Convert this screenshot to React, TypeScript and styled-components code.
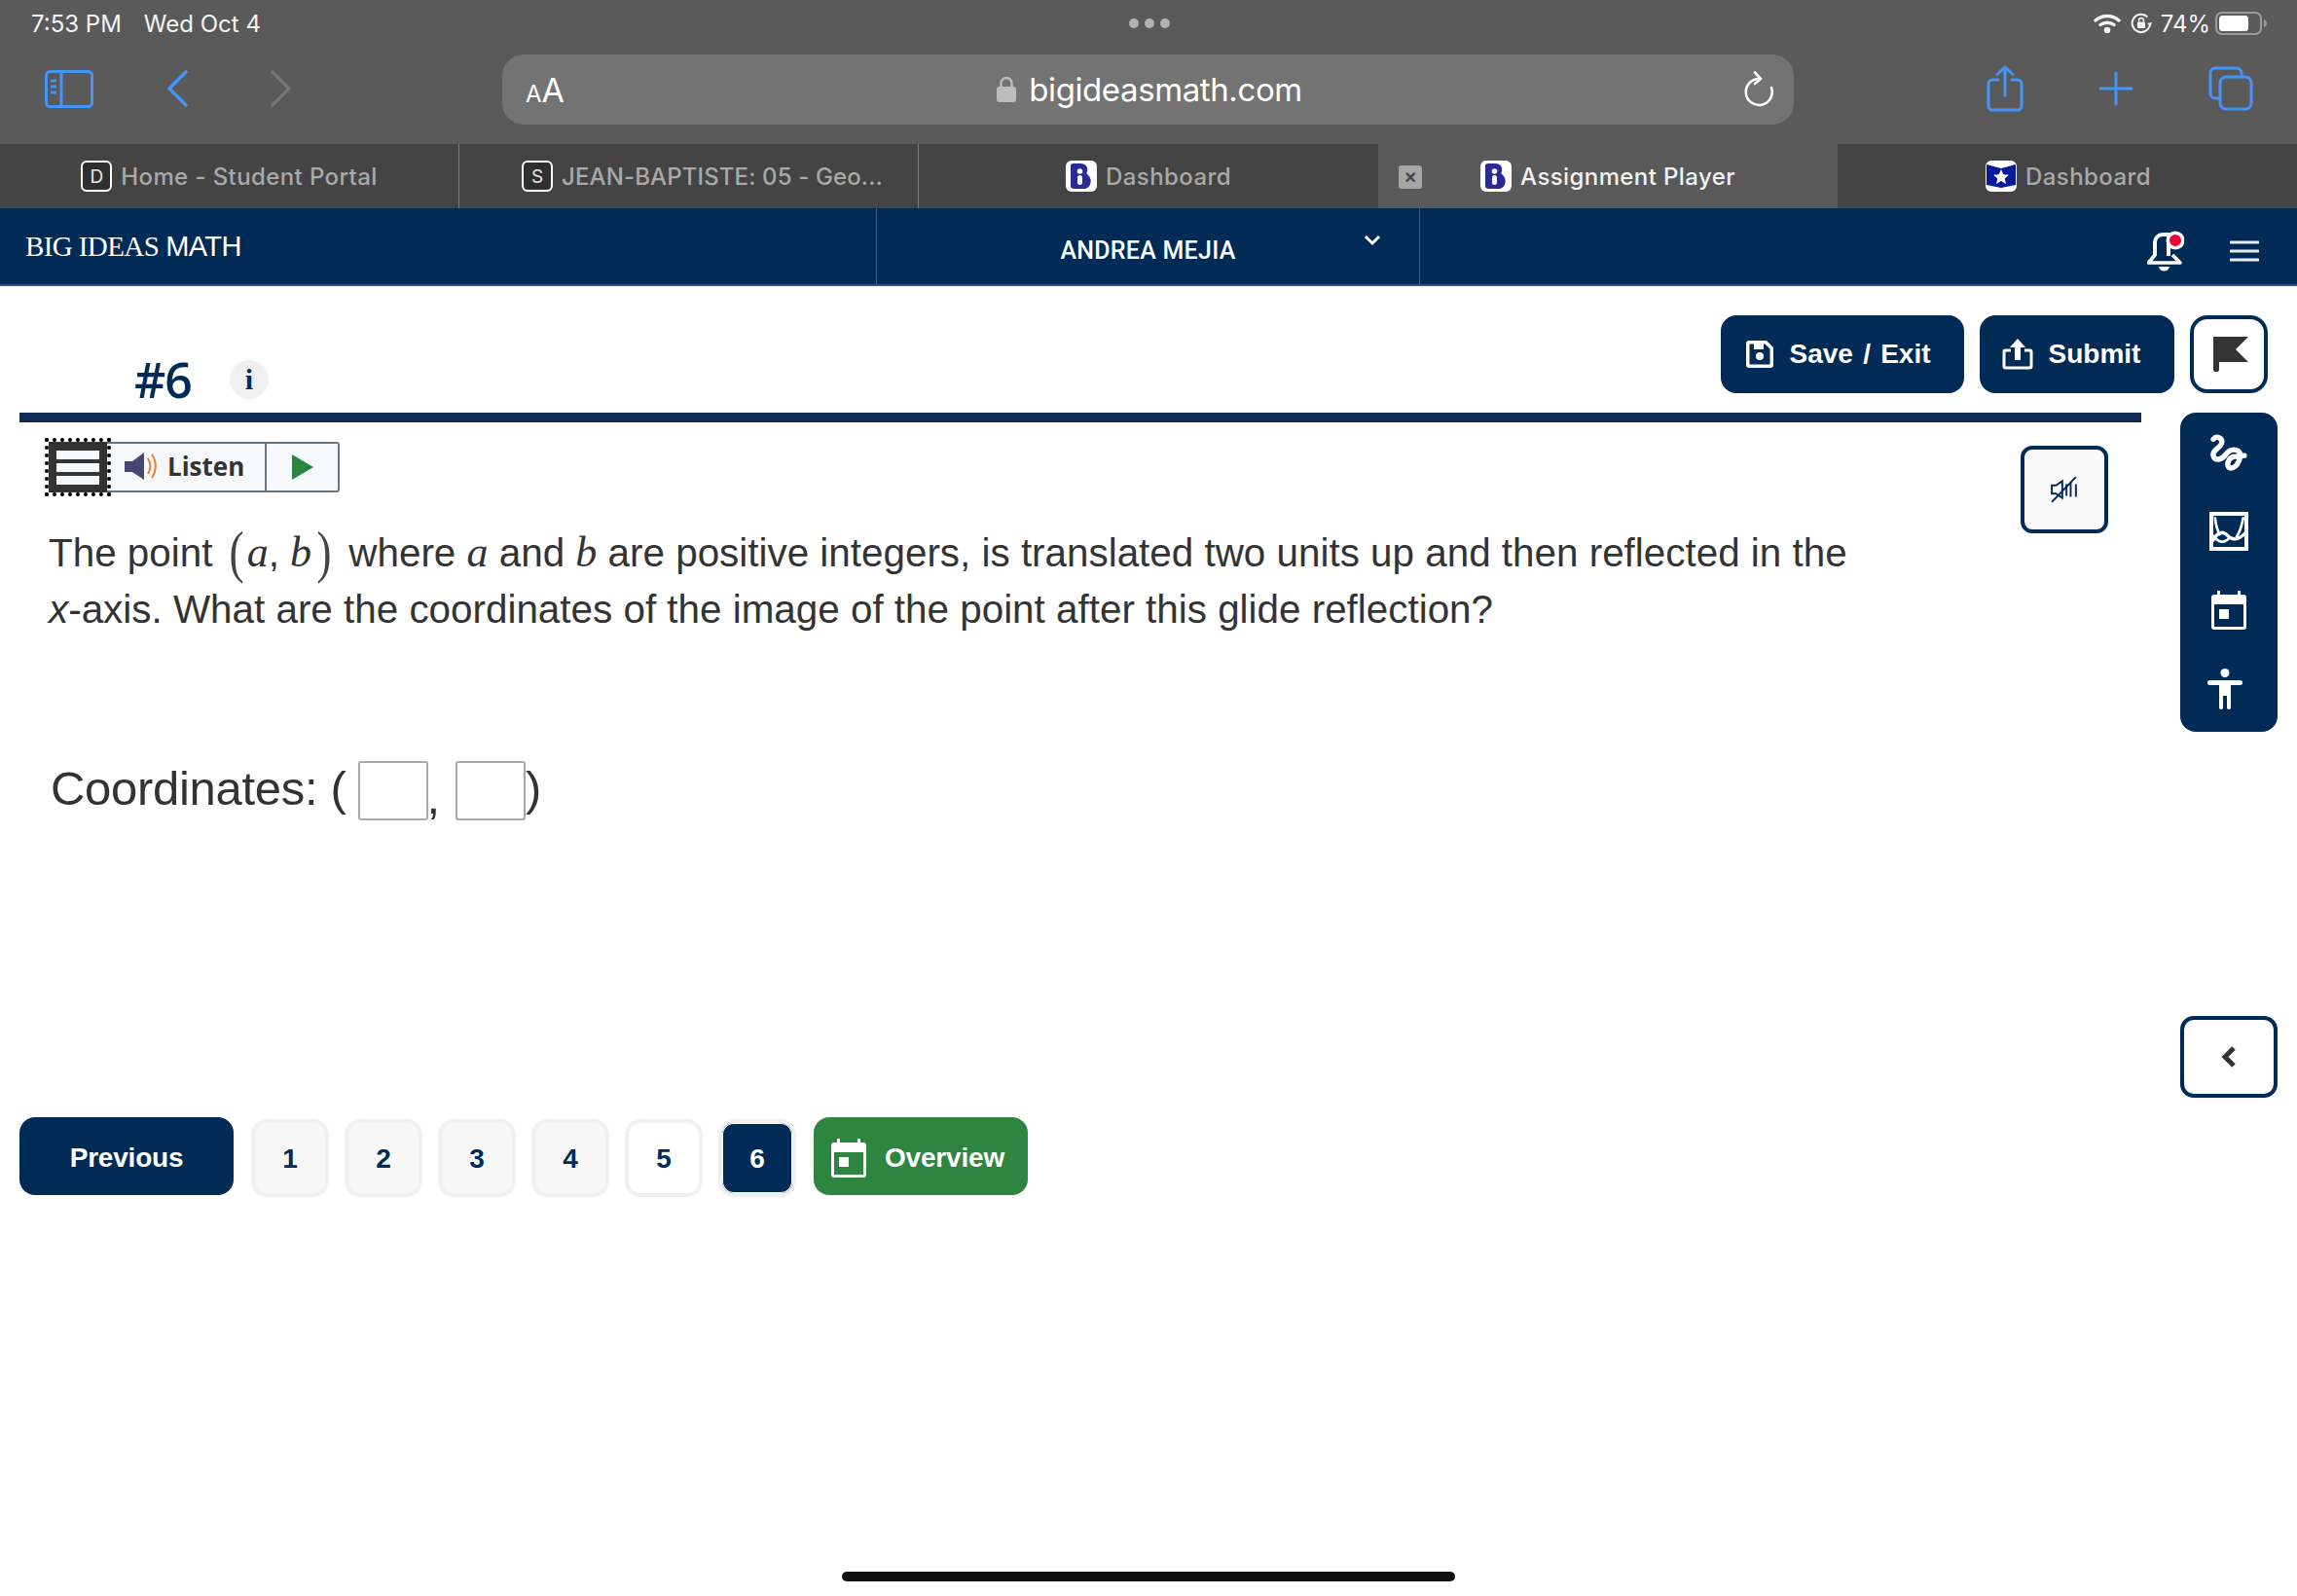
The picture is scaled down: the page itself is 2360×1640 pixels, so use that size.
import React from 'react';
import styled, { createGlobalStyle } from 'styled-components';

const NAVY = '#002b56';
const BLUE = '#4594f9';
const SANS = '"Liberation Sans", Arial, sans-serif';
const UI = 'Inter, "Noto Sans", sans-serif';

const Global = createGlobalStyle`
  html, body { margin: 0; padding: 0; background: #fff; }
  body { width: 2360px; height: 1640px; overflow: hidden; font-family: ${SANS}; }
`;

const Page = styled.div`
  width: 2360px;
  height: 1640px;
  display: flex;
  flex-direction: column;
`;

const StatusBar = styled.div`
  height: 48px;
  background: #5a5a5a;
  display: grid;
  grid-template-columns: 1fr auto 1fr;
  align-items: center;
  padding: 0 30px 0 32px;
  box-sizing: border-box;
  color: #f4f4f4;
  font: 400 24px ${UI};
`;

const StatusLeft = styled.div`
  display: flex;
  gap: 23px;
`;

const Dots = styled.div`
  display: flex;
  gap: 6px;
`;

const Dot = styled.span`
  width: 10px;
  height: 10px;
  border-radius: 50%;
  background: #b4b4b4;
`;

const StatusRight = styled.div`
  display: flex;
  align-items: center;
  justify-content: flex-end;
  gap: 9px;
`;

const Toolbar = styled.div`
  height: 100px;
  background: #5a5a5a;
  display: flex;
  align-items: flex-start;
  box-sizing: border-box;
`;

const NavGroup = styled.div`
  width: 516px;
  height: 86px;
  box-sizing: border-box;
  padding-left: 46px;
  display: flex;
  align-items: center;
  gap: 76px;
`;

const AddressBar = styled.div`
  width: 1327px;
  height: 72px;
  margin-top: 8px;
  border-radius: 22px;
  background: #737373;
  position: relative;
  display: flex;
  align-items: center;
  justify-content: space-between;
  box-sizing: border-box;
  padding: 0 20px 0 24px;
  color: #fff;
`;

const FontSize = styled.div`
  font: 400 34px ${UI};
  letter-spacing: -1px;
  small {
    font-size: 24px;
    margin-right: 1px;
  }
`;

const Url = styled.div`
  display: flex;
  align-items: center;
  gap: 13px;
  font: 400 33px ${UI};
  letter-spacing: -0.4px;
  margin-left: -8px;
`;

const ActionGroup = styled.div`
  display: flex;
  align-items: center;
  gap: 77px;
  height: 86px;
  padding-left: 198px;
`;

const TabStrip = styled.div`
  height: 66px;
  display: grid;
  grid-template-columns: repeat(5, 472px);
  background: #444;
`;

const Tab = styled.div<{ $active?: boolean; $divider?: boolean; $tight?: boolean; $nudge?: number }>`
  position: relative;
  box-sizing: border-box;
  display: flex;
  align-items: center;
  justify-content: center;
  gap: 9px;
  background: ${(p) => (p.$active ? '#5a5a5a' : '#444')};
  color: ${(p) => (p.$active ? '#f2f2f2' : '#a9a9a9')};
  border-right: ${(p) => (p.$divider ? '1px solid #7a7a7a' : 'none')};
  padding-left: ${(p) => (p.$tight ? 28 : p.$nudge ?? 0)}px;
  font: 500 24px ${UI};
  letter-spacing: ${(p) => (p.$tight ? '0.12px' : '0.4px')};
`;

const LetterIcon = styled.span`
  width: 32px;
  height: 32px;
  box-sizing: border-box;
  border: 2px solid #fff;
  border-radius: 6px;
  background: #2f2f2f;
  color: #e8e8e8;
  font: 400 19px ${UI};
  letter-spacing: 0;
  display: flex;
  align-items: center;
  justify-content: center;
`;

const CloseBox = styled.span`
  position: absolute;
  left: 21px;
  top: 22px;
  width: 24px;
  height: 24px;
  border-radius: 3px;
  background: #a5a5a5;
  color: #444;
  font: 700 20px ${SANS};
  letter-spacing: 0;
  display: flex;
  align-items: center;
  justify-content: center;
`;

const AppHeader = styled.div`
  height: 80px;
  box-sizing: border-box;
  background: ${NAVY};
  border-bottom: 2px solid #2a5486;
  display: grid;
  grid-template-columns: 900px 559px 1fr;
  color: #fff;
`;

const Brand = styled.div`
  display: flex;
  align-items: center;
  padding-left: 26px;
  font: 400 29px "Liberation Serif", serif;
  letter-spacing: -0.6px;
  span {
    font-family: ${SANS};
    font-size: 29px;
    margin-left: 7px;
  }
`;

const UserMenu = styled.div`
  position: relative;
  border-left: 1px solid #3e5f86;
  border-right: 1px solid #3e5f86;
  display: flex;
  align-items: center;
  justify-content: center;
  padding-top: 8px;
  font: 500 25px Roboto, sans-serif;
  letter-spacing: 0.25px;
  svg {
    position: absolute;
    left: 500px;
    top: 27px;
  }
`;

const HeaderTools = styled.div`
  display: flex;
  align-items: center;
  justify-content: flex-end;
  gap: 47px;
  padding-right: 39px;
  padding-top: 10px;
`;

const QuestionHead = styled.div`
  height: 130px;
  box-sizing: border-box;
  padding: 30px 30px 0 138px;
  display: flex;
  align-items: flex-start;
`;

const Title = styled.div`
  margin-top: 46px;
  height: 40px;
  display: flex;
  align-items: center;
  gap: 39px;
  color: ${NAVY};
  font: 600 50px "Open Sans", sans-serif;
  letter-spacing: -1px;
`;

const InfoDot = styled.span`
  width: 40px;
  height: 40px;
  border-radius: 50%;
  background: #f0f0f0;
  font: 700 30px "Liberation Serif", serif;
  letter-spacing: 0;
  display: flex;
  align-items: center;
  justify-content: center;
`;

const HeadActions = styled.div`
  margin-left: auto;
  display: flex;
  gap: 16px;
`;

const PrimaryButton = styled.button<{ $width: number; $shift?: number }>`
  width: ${(p) => p.$width}px;
  height: 80px;
  border: 0;
  border-radius: 16px;
  background: ${NAVY};
  color: #fff;
  font: 700 28px ${SANS};
  word-spacing: 2.5px;
  display: flex;
  align-items: center;
  justify-content: center;
  gap: 16px;
  padding: 0 ${(p) => p.$shift ?? 0}px 0 0;
`;

const PagerButton = styled(PrimaryButton)<{ $green?: boolean }>`
  background: ${(p) => (p.$green ? '#2e8540' : NAVY)};
  padding-top: 4px;
  gap: 19px;
  letter-spacing: -0.2px;
`;

const FlagButton = styled.button`
  width: 80px;
  height: 80px;
  box-sizing: border-box;
  border: 4px solid ${NAVY};
  border-radius: 18px;
  background: #fff;
  display: flex;
  align-items: center;
  justify-content: center;
  padding: 0 0 0 4px;
`;

const ContentRow = styled.div`
  display: flex;
  padding: 0 20px;
  gap: 40px;
`;

const Main = styled.div`
  width: 2180px;
`;

const Rule = styled.div`
  height: 10px;
  background: #0f2a56;
`;

const ToolRow = styled.div`
  height: 84px;
  margin-top: 20px;
  padding: 0 34px 0 30px;
  display: flex;
  justify-content: space-between;
  align-items: flex-start;
`;

const ListenWidget = styled.div`
  width: 299px;
  height: 52px;
  box-sizing: border-box;
  border: 2px solid #68747f;
  border-radius: 3px;
  background: #f5f9fc;
  display: flex;
`;

const DragHandle = styled.div`
  width: 60px;
  margin: -2px 0 -2px -2px;
  box-sizing: border-box;
  background: #333;
  outline: 4px dotted #000;
  outline-offset: 0;
  padding: 9px 8px 8px;
  display: flex;
  flex-direction: column;
  gap: 4px;
  i {
    flex: 1;
    background: #f5f9fc;
  }
`;

const ListenLabel = styled.div`
  width: 164px;
  box-sizing: border-box;
  border-right: 2px solid #68747f;
  display: flex;
  align-items: center;
  gap: 9px;
  padding: 0 0 2px 18px;
  color: #333;
  font: 700 26px "Open Sans", sans-serif;
`;

const PlayCell = styled.div`
  flex: 1;
  display: flex;
  align-items: center;
  padding-left: 26px;
`;

const MuteButton = styled.button`
  width: 90px;
  height: 90px;
  margin-top: 4px;
  box-sizing: border-box;
  border: 4px solid ${NAVY};
  border-radius: 12px;
  background: #fafafa;
  display: flex;
  align-items: center;
  justify-content: center;
  padding: 0;
`;

const Question = styled.div`
  margin: 1px 0 0 30px;
  color: #333;
  font: 400 40.4px/57.5px ${SANS};
  em {
    font-family: "Liberation Serif", serif;
    font-size: 44px;
  }
`;

const Paren = styled.span<{ $close?: boolean }>`
  display: inline-block;
  font: 400 60px/0 "Liberation Serif", serif;
  color: #444;
  transform: scaleX(0.75);
  vertical-align: -5px;
  margin: 0 ${(p) => (p.$close ? 4 : 1)}px 0 3px;
`;

const Answer = styled.div`
  margin: 127px 0 0 32px;
  height: 61px;
  display: flex;
  align-items: center;
  color: #333;
  font: 400 49px ${SANS};
  letter-spacing: -0.3px;
  span {
    margin-bottom: 5px;
  }
`;

const AnswerBox = styled.i<{ $gap: number }>`
  width: 72px;
  height: 61px;
  margin-left: ${(p) => p.$gap}px;
  box-sizing: border-box;
  border: 2px solid #a8a8a8;
  border-radius: 3px;
  background: #fff;
`;

const Comma = styled.b`
  font-weight: 400;
  margin: 12px 0 0 -1px;
`;

const Pager = styled.div`
  margin-top: 305px;
  display: flex;
  align-items: flex-start;
  gap: 18px;
`;

const PageNumbers = styled.div`
  margin-top: 2px;
  display: flex;
  gap: 16px;
`;

const PageNumber = styled.button<{ $state: 'done' | 'open' | 'current' }>`
  width: 80px;
  height: 80px;
  box-sizing: border-box;
  border: 4px solid #f0f0f0;
  border-radius: 16px;
  padding: 2px 0 0;
  color: ${(p) => (p.$state === 'current' ? '#fff' : NAVY)};
  background: ${(p) => (p.$state === 'done' ? '#f7f7f7' : p.$state === 'open' ? '#fff' : NAVY)};
  box-shadow: ${(p) => (p.$state === 'current' ? 'inset 0 0 0 1px #fff' : 'none')};
  font: 700 28px ${SANS};
`;

const RightColumn = styled.div`
  width: 100px;
`;

const Rail = styled.div`
  height: 328px;
  box-sizing: border-box;
  padding-bottom: 4px;
  border-radius: 16px;
  background: ${NAVY};
  display: grid;
  grid-template-rows: repeat(4, 81px);
  justify-items: center;
  align-items: center;
  color: #fff;
`;

const CollapseButton = styled.button`
  width: 100px;
  height: 84px;
  margin-top: 292px;
  box-sizing: border-box;
  border: 4px solid ${NAVY};
  border-radius: 14px;
  background: #fff;
  display: flex;
  align-items: center;
  justify-content: center;
  padding: 0;
`;

const HomeIndicator = styled.div`
  width: 630px;
  height: 10px;
  margin: auto auto 15px;
  border-radius: 5px;
  background: #111;
`;

const Wifi = () => (
  <svg width="28" height="20" viewBox="0 0 28 20" fill="none" stroke="#f4f4f4" strokeWidth="3.4" strokeLinecap="round" style={{ marginRight: 1 }}>
    <path d="M2 7 C9 1 19 1 26 7" />
    <path d="M7 11.5 C11 8.5 17 8.5 21 11.5" />
    <circle cx="14" cy="17" r="1.6" fill="#f4f4f4" />
  </svg>
);

const OrientationLock = () => (
  <svg width="22" height="22" viewBox="0 0 22 22" fill="none" stroke="#f4f4f4" strokeWidth="2">
    <path d="M20 12 A9.2 9.2 0 1 1 17.5 4.5" />
    <path d="M17 11 L20.5 14 L22 10" fill="#f4f4f4" stroke="none" />
    <rect x="7" y="9.5" width="8" height="6.5" rx="1" fill="#f4f4f4" stroke="none" />
    <path d="M8.6 9.5 V8 a2.4 2.4 0 0 1 4.8 0 V9.5" strokeWidth="1.5" />
  </svg>
);

const Battery = () => (
  <svg width="54" height="24" viewBox="0 0 54 24" style={{ marginLeft: -4 }}>
    <rect x="1" y="1" width="46" height="22" rx="6" fill="none" stroke="#9a9a9a" strokeWidth="2" />
    <rect x="4" y="4" width="30" height="16" rx="3.5" fill="#fff" />
    <path d="M50 8 C52 9 53 10 53 12 C53 14 52 15 50 16 Z" fill="#9a9a9a" />
  </svg>
);

const SidebarIcon = () => (
  <svg width="50" height="39" viewBox="0 0 50 39" fill="none" stroke={BLUE} strokeWidth="3">
    <rect x="1.5" y="1.5" width="47" height="36" rx="4" />
    <path d="M17 1.5 V37.5" />
    <path d="M6 11 H12 M6 17 H12 M6 23 H12" />
  </svg>
);

const NavChevron = ({ back }: { back?: boolean }) => (
  <svg width="30" height="38" viewBox="0 0 30 38" fill="none" stroke={back ? BLUE : '#767676'} strokeWidth="3.4" strokeLinecap="round" strokeLinejoin="round">
    {back ? <path d="M19 2 L2 19 L19 36" /> : <path d="M2 2 L19 19 L2 36" />}
  </svg>
);

const LockIcon = () => (
  <svg width="20" height="26" viewBox="0 0 20 26">
    <rect x="0" y="10" width="20" height="16" rx="3" fill="#bdbdbd" />
    <path d="M4.5 11 V6.5 a5.5 5.5 0 0 1 11 0 V11" fill="none" stroke="#bdbdbd" strokeWidth="2.4" />
  </svg>
);

const ReloadIcon = () => (
  <svg width="32" height="38" viewBox="0 0 32 38" fill="none" stroke="#fff" strokeWidth="2.6" strokeLinecap="round" strokeLinejoin="round">
    <path d="M17 8 A13.5 13.5 0 1 0 29 17" />
    <path d="M12 1.5 L18 8 L12 13" />
  </svg>
);

const ShareIcon = () => (
  <svg width="38" height="48" viewBox="0 0 38 48" fill="none" stroke={BLUE} strokeWidth="3" strokeLinecap="round" strokeLinejoin="round">
    <path d="M12 15 H6 a4 4 0 0 0 -4 4 V42 a4 4 0 0 0 4 4 H32 a4 4 0 0 0 4 -4 V19 a4 4 0 0 0 -4 -4 H26" />
    <path d="M19 31 V2 M11 9.5 L19 2 L27 9.5" />
  </svg>
);

const PlusIcon = () => (
  <svg width="36" height="36" viewBox="0 0 36 36" fill="none" stroke={BLUE} strokeWidth="3" strokeLinecap="round">
    <path d="M18 2 V34 M2 18 H34" />
  </svg>
);

const TabsIcon = () => (
  <svg width="46" height="46" viewBox="0 0 46 46" fill="none" stroke={BLUE} strokeWidth="3">
    <path d="M11 33 H7 a5 5 0 0 1 -5 -5 V7 a5 5 0 0 1 5 -5 H29 a5 5 0 0 1 5 5 V11" />
    <rect x="12" y="11" width="32" height="33" rx="6" />
  </svg>
);

const BookIcon = () => (
  <svg width="32" height="32" viewBox="0 0 32 32">
    <rect width="32" height="32" rx="6" fill="#fff" />
    <path d="M5 5 Q5 3 8 3 H15 C21 3 23 7 22 11 C21 13 21 13 23 15 C27 18 27 27 20 29 H9 Q5 29 5 26 Z" fill="#2a2a92" />
    <circle cx="14.5" cy="11" r="2.8" fill="#fff" />
    <rect x="12" y="15" width="5" height="10" rx="2.5" fill="#fff" />
  </svg>
);

const ShieldIcon = () => (
  <svg width="32" height="32" viewBox="0 0 32 32">
    <rect width="32" height="32" rx="6" fill="#fff" />
    <path d="M1 4 L16 8 L31 4 V25 L16 28 L1 25 Z" fill="#08189a" />
    <path d="M16 9 L18.3 14.2 L24 14.8 L19.7 18.5 L21 24 L16 21.1 L11 24 L12.3 18.5 L8 14.8 L13.7 14.2 Z" fill="#fff" />
  </svg>
);

const BellIcon = () => (
  <svg width="38" height="42" viewBox="0 0 38 42" fill="none">
    <path d="M8 26 V12 a8 8 0 0 1 8 -8 H22 V26" stroke="#fff" strokeWidth="4" />
    <path d="M8 25 L1.5 33 H34 L26 25" stroke="#fff" strokeWidth="3.6" strokeLinejoin="round" />
    <path d="M12 37 H23 C22 43 13 43 12 37 Z" fill="#fff" />
    <circle cx="29" cy="10" r="9.5" fill="#fff" />
    <circle cx="29" cy="10" r="6" fill="#f0003c" />
  </svg>
);

const Hamburger = () => (
  <svg width="30" height="22" viewBox="0 0 30 22" fill="none" stroke="#e8ecf1" strokeWidth="3" strokeLinecap="round">
    <path d="M1 2 H29 M1 11 H29 M1 20 H29" />
  </svg>
);

const SaveIcon = () => (
  <svg width="28" height="28" viewBox="0 0 28 28">
    <path
      fillRule="evenodd"
      d="M3 0 H21 L28 7 V25 a3 3 0 0 1 -3 3 H3 a3 3 0 0 1 -3 -3 V3 a3 3 0 0 1 3 -3 Z M3.5 3.5 V24.5 H24.5 V8.5 L19.5 3.5 H18 V9 H8 V3.5 Z M14 12 a4 4 0 1 1 0 8 a4 4 0 1 1 0 -8 Z"
      fill="#fff"
    />
  </svg>
);

const SubmitIcon = () => (
  <svg width="32" height="32" viewBox="0 0 32 32">
    <path d="M9 12 H3.5 a1.5 1.5 0 0 0 -1.5 1.5 V28.5 a1.5 1.5 0 0 0 1.5 1.5 H28.5 a1.5 1.5 0 0 0 1.5 -1.5 V13.5 a1.5 1.5 0 0 0 -1.5 -1.5 H23" fill="none" stroke="#fff" strokeWidth="3" />
    <path d="M16 0 L24 9 H19 V22 H13 V9 H8 Z" fill="#fff" />
  </svg>
);

const FlagIcon = () => (
  <svg width="36" height="36" viewBox="0 0 36 36">
    <path d="M0 0 H36 L23 13 L36 26 H6 V33.5 a3 3 0 0 1 -6 0 Z" fill="#333" />
  </svg>
);

const SpeakerIcon = () => (
  <svg width="35" height="28" viewBox="0 0 35 28">
    <path d="M0 9 H8 L20 0 V28 L8 20 H0 Z" fill="#47476f" strokeLinejoin="round" />
    <path d="M24 6 C27 11 27 17 24 22" fill="none" stroke="#ef7a3a" strokeWidth="2" />
    <path d="M28 2 C33 9 33 19 28 26" fill="none" stroke="#ef7a3a" strokeWidth="2" />
  </svg>
);

const PlayIcon = () => (
  <svg width="22" height="26" viewBox="0 0 22 26">
    <path d="M0 0 L22 13 L0 26 Z" fill="#2a8540" />
  </svg>
);

const MuteIcon = () => (
  <svg width="28" height="28" viewBox="0 0 26 26" fill="none" stroke={NAVY} strokeWidth="1.8">
    <path d="M1 9 H5 L11 5 V21 L5 17 H1 Z" />
    <path d="M24 1 L1 25" />
    <path d="M15 8 V19 M19 6 V20 M24 8 V20" />
  </svg>
);

const SquiggleIcon = () => (
  <svg width="42" height="42" viewBox="60 40 125 125" fill="none" stroke="#fff" strokeWidth="16" strokeLinecap="round" strokeLinejoin="round">
    <path d="M75 62 C85 50 105 58 100 75 C95 90 70 95 75 112 C80 130 100 125 112 110 C120 98 135 88 152 98 C165 110 150 150 128 150 C112 148 118 118 140 115 L170 112" />
  </svg>
);

const GraphIcon = () => (
  <svg width="40" height="40" viewBox="60 288 120 120" fill="none" stroke="#fff">
    <rect x="66" y="294" width="108" height="108" strokeWidth="12" />
    <path d="M77 304 C80 330 86 350 94 360 M165 304 C160 330 152 355 142 368" strokeWidth="8" />
    <path d="M70 378 C85 350 100 345 115 360 C130 378 150 375 172 352" strokeWidth="10" />
    <path d="M72 360 C88 385 105 385 120 370" strokeWidth="8" />
  </svg>
);

const CalendarIcon = () => (
  <svg width="36" height="40" viewBox="0 0 36 40">
    <path
      fillRule="evenodd"
      d="M6 0 H9 V4 H27 V0 H30 V4 H33 a3 3 0 0 1 3 3 V37 a3 3 0 0 1 -3 3 H3 a3 3 0 0 1 -3 -3 V7 a3 3 0 0 1 3 -3 H6 Z M3 14 V37 H33 V14 Z"
      fill="currentColor"
    />
    <rect x="8" y="19" width="10" height="10" fill="currentColor" />
  </svg>
);

const AccessIcon = () => (
  <svg width="36" height="42" viewBox="0 0 36 42" fill="#fff" style={{ marginLeft: -8 }}>
    <circle cx="18" cy="4.5" r="4.5" />
    <rect x="0" y="12" width="36" height="5" rx="2.5" />
    <path d="M12 14 H24 V40 a2 2 0 0 1 -4 0 V28 H16 V40 a2 2 0 0 1 -4 0 Z" />
  </svg>
);

const App = () => {
  return (
    <Page>
      <Global />
      <StatusBar>
        <StatusLeft>
          <span>7:53 PM</span>
          <span>Wed Oct 4</span>
        </StatusLeft>
        <Dots>
          <Dot />
          <Dot />
          <Dot />
        </Dots>
        <StatusRight>
          <Wifi />
          <OrientationLock />
          <span>74%</span>
          <Battery />
        </StatusRight>
      </StatusBar>

      <Toolbar>
        <NavGroup>
          <SidebarIcon />
          <NavChevron back />
          <NavChevron />
        </NavGroup>
        <AddressBar>
          <FontSize>
            <small>A</small>A
          </FontSize>
          <Url>
            <LockIcon />
            bigideasmath.com
          </Url>
          <ReloadIcon />
        </AddressBar>
        <ActionGroup>
          <ShareIcon />
          <PlusIcon />
          <TabsIcon />
        </ActionGroup>
      </Toolbar>

      <TabStrip>
        <Tab $divider>
          <LetterIcon>D</LetterIcon>
          Home - Student Portal
        </Tab>
        <Tab $divider $tight>
          <LetterIcon>S</LetterIcon>
          JEAN-BAPTISTE: 05 - Geo...
        </Tab>
        <Tab>
          <BookIcon />
          Dashboard
        </Tab>
        <Tab $active>
          <CloseBox>×</CloseBox>
          <BookIcon />
          Assignment Player
        </Tab>
        <Tab $nudge={2}>
          <ShieldIcon />
          Dashboard
        </Tab>
      </TabStrip>

      <AppHeader>
        <Brand>
          BIG IDEAS<span>MATH</span>
        </Brand>
        <UserMenu>
          ANDREA MEJIA
          <svg width="18" height="12" viewBox="0 0 18 12" fill="none" stroke="#fff" strokeWidth="3">
            <path d="M2 2 L9 9 L16 2" />
          </svg>
        </UserMenu>
        <HeaderTools>
          <BellIcon />
          <Hamburger />
        </HeaderTools>
      </AppHeader>

      <QuestionHead>
        <Title>
          #6
          <InfoDot>i</InfoDot>
        </Title>
        <HeadActions>
          <PrimaryButton $width={250} $shift={8}>
            <SaveIcon />
            Save / Exit
          </PrimaryButton>
          <PrimaryButton $width={200} $shift={12}>
            <SubmitIcon />
            Submit
          </PrimaryButton>
          <FlagButton>
            <FlagIcon />
          </FlagButton>
        </HeadActions>
      </QuestionHead>

      <ContentRow>
        <Main>
          <Rule />
          <ToolRow>
            <ListenWidget>
              <DragHandle>
                <i />
                <i />
                <i />
              </DragHandle>
              <ListenLabel>
                <SpeakerIcon />
                Listen
              </ListenLabel>
              <PlayCell>
                <PlayIcon />
              </PlayCell>
            </ListenWidget>
            <MuteButton>
              <MuteIcon />
            </MuteButton>
          </ToolRow>
          <Question>
            The point <Paren>(</Paren>
            <em>a</em>, <em>b</em>
            <Paren $close>)</Paren> where <em>a</em> and <em>b</em> are positive integers, is translated two units up and then reflected in the
            <br />
            <i>x</i>-axis. What are the coordinates of the image of the point after this glide reflection?
          </Question>
          <Answer>
            <span>Coordinates: (</span>
            <AnswerBox $gap={12} />
            <Comma>,</Comma>
            <AnswerBox $gap={16} />
            <span>)</span>
          </Answer>
          <Pager>
            <PagerButton $width={220}>Previous</PagerButton>
            <PageNumbers>
              <PageNumber $state="done">1</PageNumber>
              <PageNumber $state="done">2</PageNumber>
              <PageNumber $state="done">3</PageNumber>
              <PageNumber $state="done">4</PageNumber>
              <PageNumber $state="open">5</PageNumber>
              <PageNumber $state="current">6</PageNumber>
            </PageNumbers>
            <PagerButton $width={220} $green $shift={6}>
              <CalendarIcon />
              Overview
            </PagerButton>
          </Pager>
        </Main>
        <RightColumn>
          <Rail>
            <SquiggleIcon />
            <GraphIcon />
            <CalendarIcon />
            <AccessIcon />
          </Rail>
          <CollapseButton>
            <svg width="16" height="22" viewBox="0 0 16 22" fill="none" stroke="#333" strokeWidth="5">
              <path d="M13 2 L4 11 L13 20" />
            </svg>
          </CollapseButton>
        </RightColumn>
      </ContentRow>
      <HomeIndicator />
    </Page>
  );
};

export default App;
